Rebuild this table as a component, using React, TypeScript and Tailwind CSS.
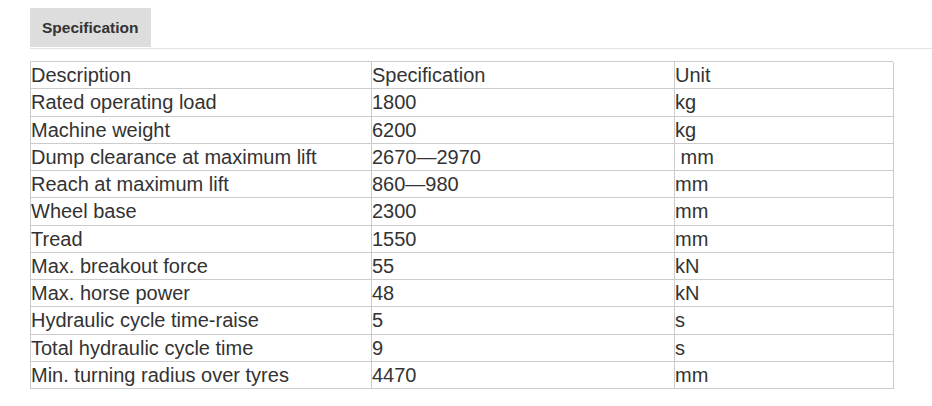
import React from "react";

const rows: [string, string, string][] = [
  ["Description", "Specification", "Unit"],
  ["Rated operating load", "1800", "kg"],
  ["Machine weight", "6200", "kg"],
  ["Dump clearance at maximum lift", "2670\u20142970", "\u00a0mm"],
  ["Reach at maximum lift", "860\u2014980", "mm"],
  ["Wheel base", "2300", "mm"],
  ["Tread", "1550", "mm"],
  ["Max. breakout force", "55", "kN"],
  ["Max. horse power", "48", "kN"],
  ["Hydraulic cycle time-raise", "5", "s"],
  ["Total hydraulic cycle time", "9", "s"],
  ["Min. turning radius over tyres", "4470", "mm"],
];

export default function App() {
  return (
    <div className="w-[932px] h-[406px] bg-white pt-[8px] pl-[30px] text-[#333]" style={{ fontFamily: '"Liberation Sans", Arial, sans-serif' }}>
      <div className="flex">
        <div className="w-[121px] h-[39px] bg-[#dddddd] flex items-center pl-[12px] text-[15.5px] font-bold text-[#333]">
          Specification
        </div>
      </div>
      <div className="mt-[1px] h-[1px] bg-[#e3e3e3]" />
      <div className="mt-[12px] w-[863px] grid grid-cols-[341px_303px_219px] border-t border-l border-[#cccccc]">
        {rows.map((r, i) => (
          <React.Fragment key={i}>
            {r.map((c, j) => (
              <div
                key={j}
                className="h-[27.25px] border-r border-b border-[#cccccc] pl-0 text-[20px] leading-[26px] whitespace-pre text-[#333]"
              >
                {c}
              </div>
            ))}
          </React.Fragment>
        ))}
      </div>
    </div>
  );
}
